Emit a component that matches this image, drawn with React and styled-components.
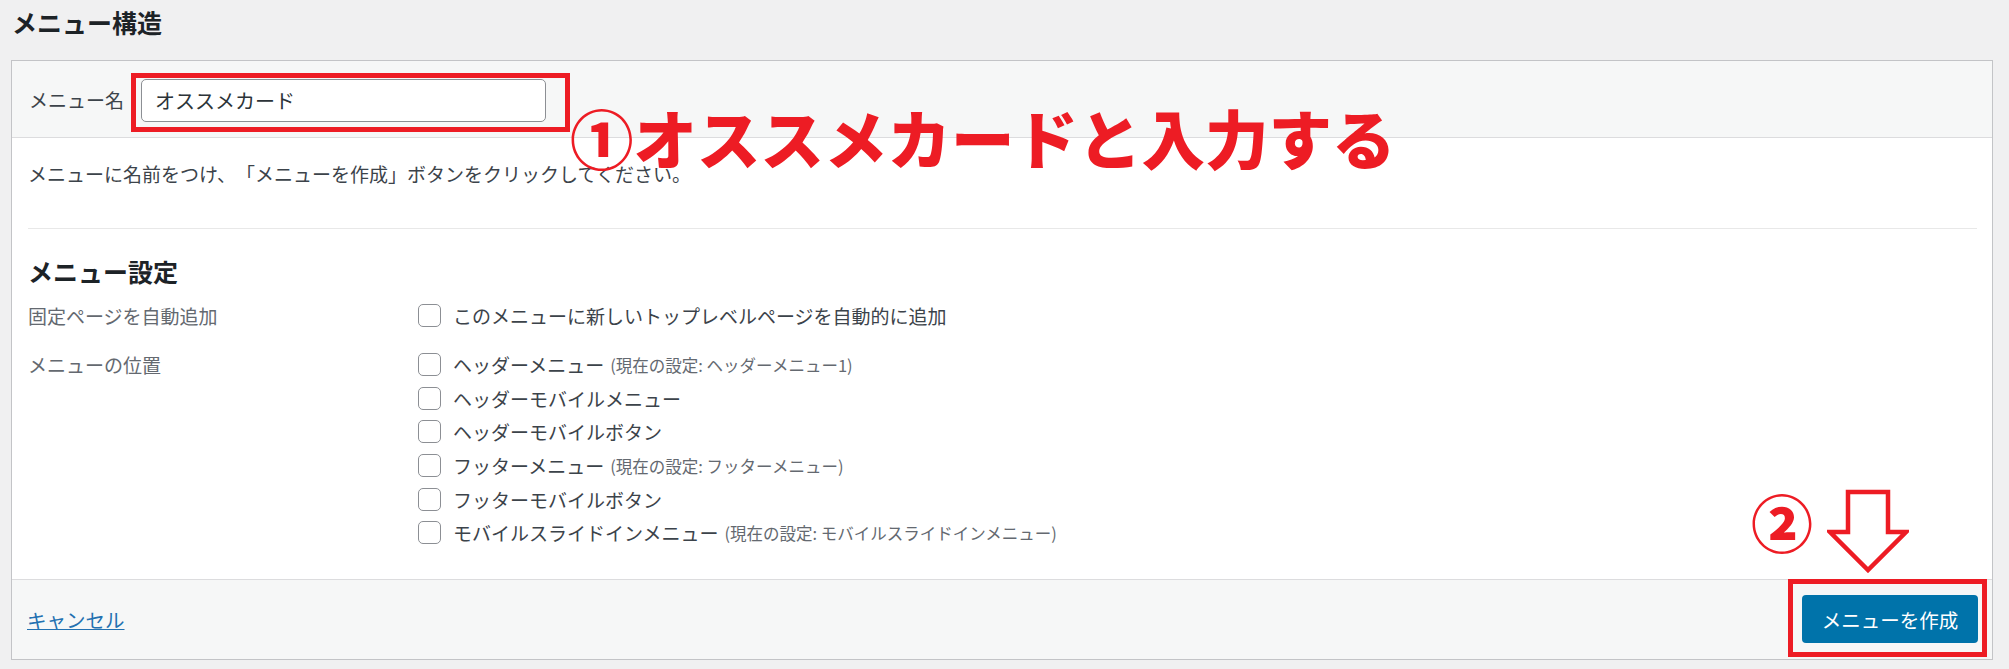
import React from 'react'
import styled, {createGlobalStyle} from 'styled-components'

const GlobalStyle = createGlobalStyle`
  html, body {
    margin: 0;
    padding: 0;
    background: #f0f0f1;
  }
  body {
    font-family: "Noto Sans CJK JP", "Noto Sans", sans-serif;
    color: #3c434a;
    text-spacing-trim: space-all;
  }
`

const Page = styled.div`
  position: relative;
  width: 2009px;
  height: 669px;
  box-sizing: border-box;
  padding: 6px 16px 0 11px;
`

const Title = styled.h2`
  margin: 0 0 0 1px;
  font-size: 25px;
  line-height: 32px;
  font-weight: 700;
  color: #1d2327;
`

const Card = styled.div`
  margin-top: 22px;
  border: 1px solid #c3c4c7;
  background: #fff;
`

const Header = styled.div`
  display: flex;
  align-items: center;
  gap: 17px;
  height: 76px;
  padding-left: 17px;
  background: #f6f7f7;
  border-bottom: 1px solid #dcdcde;
`

const Label = styled.label`
  font-size: 19px;
  color: #3c434a;
`

const NameInput = styled.input`
  box-sizing: border-box;
  width: 405px;
  height: 43px;
  margin-top: 2px;
  padding: 0 13px;
  border: 1px solid #8c8f94;
  border-radius: 5px;
  background: #fff;
  font-family: inherit;
  font-size: 20px;
  color: #2c3338;
`

const Body = styled.div`
  padding: 0 15px 29px 16px;
`

const Description = styled.p`
  margin: 0;
  padding: 22px 0 40px;
  font-size: 19px;
  line-height: 28px;
  color: #3c434a;
`

const Settings = styled.div`
  border-top: 1px solid #e8e8e8;
`

const SubTitle = styled.h3`
  margin: 26px 0 12px;
  font-size: 25px;
  line-height: 32px;
  font-weight: 700;
  color: #1d2327;
`

const Group = styled.div`
  display: grid;
  grid-template-columns: 390px 1fr;
  margin-top: ${p => (p.$first ? 0 : 15)}px;
`

const GroupLabel = styled.div`
  height: 33px;
  display: flex;
  align-items: center;
  font-size: 19px;
  color: #646970;
`

const Options = styled.div`
  display: flex;
  flex-direction: column;
`

const Option = styled.label`
  display: flex;
  align-items: center;
  height: 33.7px;
  font-size: 19px;
  color: #3c434a;
`

const Check = styled.input`
  appearance: none;
  box-sizing: border-box;
  width: 23px;
  height: 23px;
  margin: 0 12px 0 0;
  border: 1px solid #8c8f94;
  border-radius: 5px;
  background: #fff;
`

const Note = styled.span`
  margin-left: 6px;
  font-size: 16.5px;
  color: #646970;
`

const Footer = styled.div`
  display: flex;
  align-items: center;
  justify-content: space-between;
  height: 79px;
  padding: 0 14px 0 15px;
  background: #f6f7f7;
  border-top: 1px solid #dcdcde;
`

const Cancel = styled.a`
  font-size: 19.5px;
  color: #2271b1;
  text-decoration: underline;
  cursor: pointer;
`

const Primary = styled.button`
  width: 176px;
  height: 48px;
  border: none;
  border-radius: 4px;
  background: #0073aa;
  color: #fff;
  font-family: inherit;
  font-size: 19.5px;
`

const RedBox = styled.div`
  position: absolute;
  box-sizing: border-box;
  border: 5px solid #ed1c24;
  pointer-events: none;
`

const Callout = styled.div`
  position: absolute;
  font-family: "Noto Sans CJK JP", sans-serif;
  font-weight: 900;
  color: #ed1c24;
  white-space: nowrap;
  line-height: 1;
`

const Arrow = () => (
  <svg width="82" height="84" viewBox="0 0 82 84" style={{position: 'absolute', left: 1827, top: 489}}>
    <path
      d="M21 3 H61 V43 H79 L41 81 L3 43 H21 Z"
      fill="#fff"
      stroke="#ed1c24"
      strokeWidth="4.5"
      strokeLinejoin="miter"
    />
  </svg>
)

const locations = [
  {name: 'ヘッダーメニュー', note: '(現在の設定: ヘッダーメニュー1)'},
  {name: 'ヘッダーモバイルメニュー'},
  {name: 'ヘッダーモバイルボタン'},
  {name: 'フッターメニュー', note: '(現在の設定: フッターメニュー)'},
  {name: 'フッターモバイルボタン'},
  {name: 'モバイルスライドインメニュー', note: '(現在の設定: モバイルスライドインメニュー)'},
]

export default function App() {
  return (
    <>
      <GlobalStyle />
      <Page>
        <Title>メニュー構造</Title>
        <Card>
          <Header>
            <Label htmlFor="menu-name">メニュー名</Label>
            <NameInput id="menu-name" defaultValue="オススメカード" />
          </Header>
          <Body>
            <Description>メニューに名前をつけ、「メニューを作成」ボタンをクリックしてください。</Description>
            <Settings>
              <SubTitle>メニュー設定</SubTitle>
              <Group $first>
                <GroupLabel>固定ページを自動追加</GroupLabel>
                <Options>
                  <Option>
                    <Check type="checkbox" />
                    このメニューに新しいトップレベルページを自動的に追加
                  </Option>
                </Options>
              </Group>
              <Group>
                <GroupLabel>メニューの位置</GroupLabel>
                <Options>
                  {locations.map(loc => (
                    <Option key={loc.name}>
                      <Check type="checkbox" />
                      {loc.name}
                      {loc.note && <Note>{loc.note}</Note>}
                    </Option>
                  ))}
                </Options>
              </Group>
            </Settings>
          </Body>
          <Footer>
            <Cancel>キャンセル</Cancel>
            <Primary>メニューを作成</Primary>
          </Footer>
        </Card>

        <RedBox style={{left: 131, top: 73, width: 439, height: 59}} />
        <Callout style={{left: 570, top: 105, fontSize: 63.5}}>①オススメカードと入力する</Callout>
        <RedBox style={{left: 1788, top: 579, width: 199, height: 78}} />
        <Callout style={{left: 1751, top: 490, fontSize: 62}}>②</Callout>
        <Arrow />
      </Page>
    </>
  )
}
